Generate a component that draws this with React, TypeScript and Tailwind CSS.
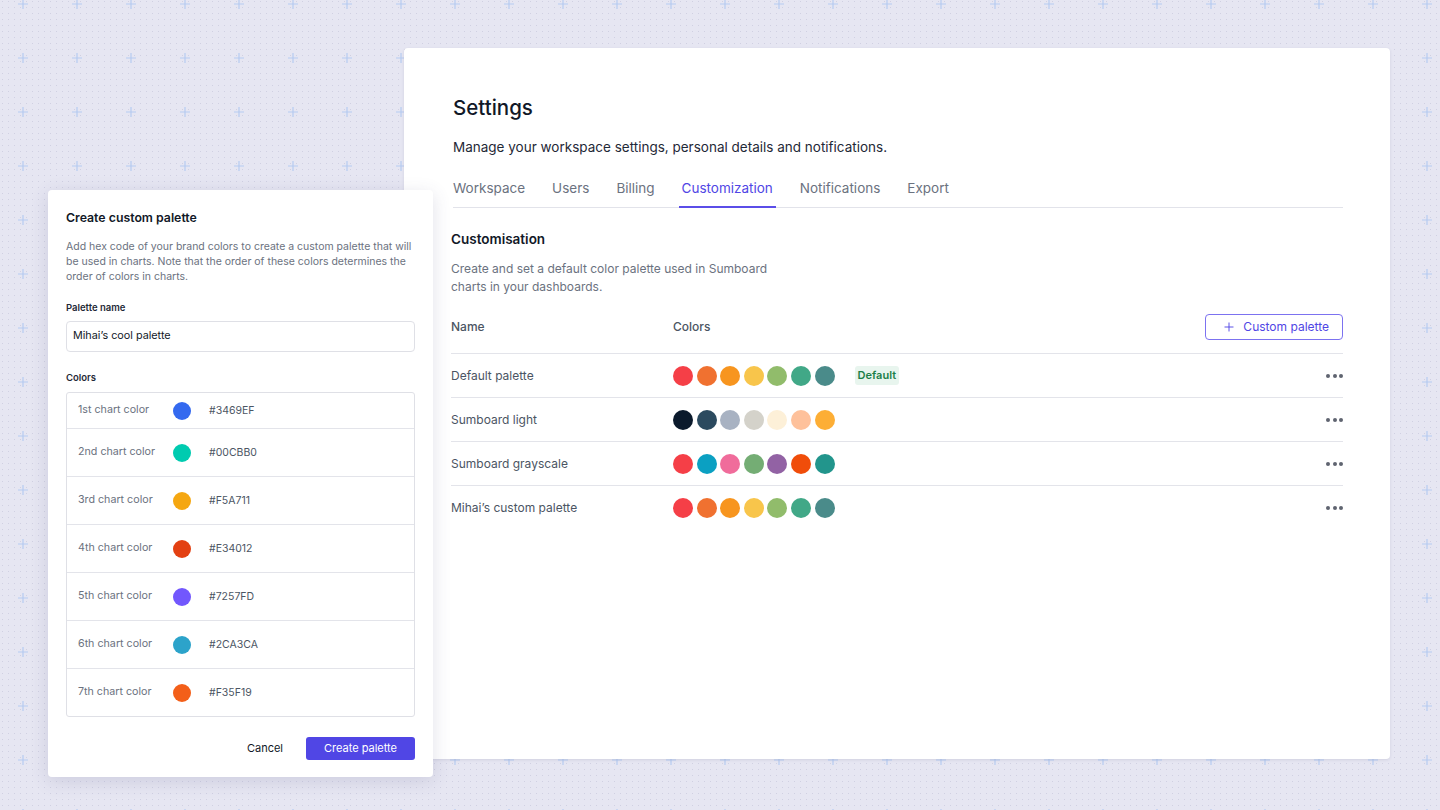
import { Plus } from "lucide-react";

const tabs = ["Workspace", "Users", "Billing", "Customization", "Notifications", "Export"];

const palettes = [
  {
    name: "Default palette",
    colors: ["#f53f47", "#f07130", "#f7951f", "#f8c54b", "#91bc6b", "#41a887", "#4a8b8a"],
    isDefault: true
  },
  {
    name: "Sumboard light",
    colors: ["#0b1a2c", "#2b4a5f", "#a8b2c2", "#d4d2ca", "#fdf0d8", "#fec19b", "#fdae35"]
  },
  {
    name: "Sumboard grayscale",
    colors: ["#f53f47", "#0ba0c2", "#f06c9b", "#74ad74", "#9262a4", "#f04d0a", "#22958c"]
  },
  {
    name: "Mihai’s custom palette",
    colors: ["#f53f47", "#f07130", "#f7951f", "#f8c54b", "#91bc6b", "#41a887", "#4a8b8a"]
  }
];

const chartColors = [
  { label: "1st chart color", hex: "#3469EF" },
  { label: "2nd chart color", hex: "#00CBB0" },
  { label: "3rd chart color", hex: "#F5A711" },
  { label: "4th chart color", hex: "#E34012" },
  { label: "5th chart color", hex: "#7257FD" },
  { label: "6th chart color", hex: "#2CA3CA" },
  { label: "7th chart color", hex: "#F35F19" }
];

function GridBackdrop() {
  return (
    <svg aria-hidden className="absolute inset-0 h-full w-full" width="1440" height="810">
      <defs>
        <pattern id="dots" width="6" height="6" patternUnits="userSpaceOnUse" x="2" y="1">
          <rect width="1" height="1" fill="#d0d0e2" />
        </pattern>
        <pattern id="plus" width="54" height="54" patternUnits="userSpaceOnUse" x="-4" y="-23">
          <path d="M27 22v10M22 27h10" stroke="#b6cbf1" strokeWidth="1.2" />
        </pattern>
      </defs>
      <rect width="100%" height="100%" fill="url(#dots)" />
      <rect width="100%" height="100%" fill="url(#plus)" />
    </svg>
  );
}

function Swatches({ colors }: { colors: string[] }) {
  return (
    <div className="flex gap-[3.6px]">
      {colors.map((c, i) => (
        <span key={i} className="h-5 w-5 rounded-full" style={{ backgroundColor: c }} />
      ))}
    </div>
  );
}

function SettingsCard() {
  return (
    <section className="ml-[404px] mt-[48px] h-[711px] w-[986px] rounded-[4px] bg-white pl-[49px] pr-[47px] pt-[46px] shadow-[0_1px_3px_rgba(60,60,100,0.12)]">
      <h1 className="text-[20.5px] font-medium leading-[28px] text-[#111827]">Settings</h1>
      <p className="mt-[15px] text-[13.5px] leading-5 text-[#1f2937]">
        Manage your workspace settings, personal details and notifications.
      </p>
      <nav className="mt-[21px] flex gap-[21px] border-b border-[#e2e3ea]">
        {tabs.map((t) => (
          <span
            key={t}
            className={
              t === "Customization"
                ? "-mb-px border-b-2 border-[#5b4ee8] px-[3px] pb-[8px] text-[13.5px] leading-5 text-[#5046e5] first:-ml-[3px]"
                : "px-[3px] pb-[9px] text-[13.5px] leading-5 text-[#6b7280] first:-ml-[3px]"
            }
          >
            {t}
          </span>
        ))}
      </nav>
      <div className="-ml-[2px]">
        <h2 className="mt-[21px] text-[13.5px] font-semibold leading-5 text-[#111827]">Customisation</h2>
        <p className="mt-[11px] w-[325px] text-[12px] leading-[18px] text-[#6b7280]">
          Create and set a default color palette used in Sumboard charts in your dashboards.
        </p>
        <div className="mt-[18px] flex items-center pb-[13px]">
          <span className="w-[222px] text-[12px] font-medium text-[#4b5563]">Name</span>
          <span className="text-[12px] font-medium text-[#4b5563]">Colors</span>
          <button className="ml-auto flex h-[26px] items-center gap-[7px] rounded-[4px] border border-[#7c72f0] pl-[16px] pr-[13px] text-[12px] text-[#5046e5]">
            <Plus size={14} strokeWidth={1.6} />
            Custom palette
          </button>
        </div>
        {palettes.map((p) => (
          <div key={p.name} className="flex h-[44px] items-center border-t border-[#e3e4ea]">
            <span className="w-[222px] text-[12px] text-[#4b5563]">{p.name}</span>
            <Swatches colors={p.colors} />
            {p.isDefault && (
              <span className="ml-[20px] rounded-[3px] bg-[#e8f5ee] px-[3px] py-[2px] text-[11px] font-semibold leading-[15px] text-[#1b8048]">
                Default
              </span>
            )}
            <span className="ml-auto flex gap-[2.5px]">
              <span className="h-[4px] w-[4px] rounded-full bg-[#5f6470]" />
              <span className="h-[4px] w-[4px] rounded-full bg-[#5f6470]" />
              <span className="h-[4px] w-[4px] rounded-full bg-[#5f6470]" />
            </span>
          </div>
        ))}
      </div>
    </section>
  );
}

function PaletteModal() {
  return (
    <div className="absolute left-[48px] top-[190px] h-[587px] w-[385px] rounded-[4px] bg-white px-[18px] pt-[19px] shadow-[0_4px_18px_rgba(70,70,120,0.16)]">
      <h3 className="text-[12.3px] font-semibold leading-[18px] text-[#111827]">Create custom palette</h3>
      <p className="mt-[12px] text-[10.5px] leading-[15px] text-[#6b7280]">
        Add hex code of your brand colors to create a custom palette that will be used in charts. Note that the order of
        these colors determines the order of colors in charts.
      </p>
      <label className="mt-[17px] block text-[9.5px] font-semibold leading-[14px] text-[#1f2937]">Palette name</label>
      <div className="mt-[6px] flex h-[31px] items-center rounded-[4px] border border-[#dfe0e6] px-[6px] text-[10.8px] text-[#111827]">
        Mihai’s cool palette
      </div>
      <div className="mt-[19px] text-[9.5px] font-semibold leading-[14px] text-[#1f2937]">Colors</div>
      <div className="mt-[7px] rounded-[3px] border border-[#dfe0e6]">
        {chartColors.map((c, i) => (
          <div
            key={c.hex}
            className={
              i === 0
                ? "flex h-[35px] items-center px-[11px]"
                : "flex h-[48px] items-center border-t border-[#e3e4ea] px-[11px]"
            }
          >
            <span className="w-[95px] text-[10.7px] text-[#6b7280]">{c.label}</span>
            <span className="h-[18px] w-[18px] rounded-full" style={{ backgroundColor: c.hex }} />
            <span className="ml-[18px] text-[10.5px] text-[#4b5563]">{c.hex}</span>
          </div>
        ))}
      </div>
      <div className="mt-[20px] flex items-center justify-end gap-[23px]">
        <button className="text-[11px] text-[#111827]">Cancel</button>
        <button className="flex h-[23px] w-[109px] items-center justify-center rounded-[3px] bg-[#5046e5] text-[11px] text-white">
          Create palette
        </button>
      </div>
    </div>
  );
}

export default function App() {
  return (
    <div className="relative h-[810px] w-[1440px] overflow-hidden bg-[#e6e6f2] font-['Inter',sans-serif]">
      <GridBackdrop />
      <div className="relative pt-px">
        <div className="-mt-px">
          <SettingsCard />
        </div>
      </div>
      <PaletteModal />
    </div>
  );
}
